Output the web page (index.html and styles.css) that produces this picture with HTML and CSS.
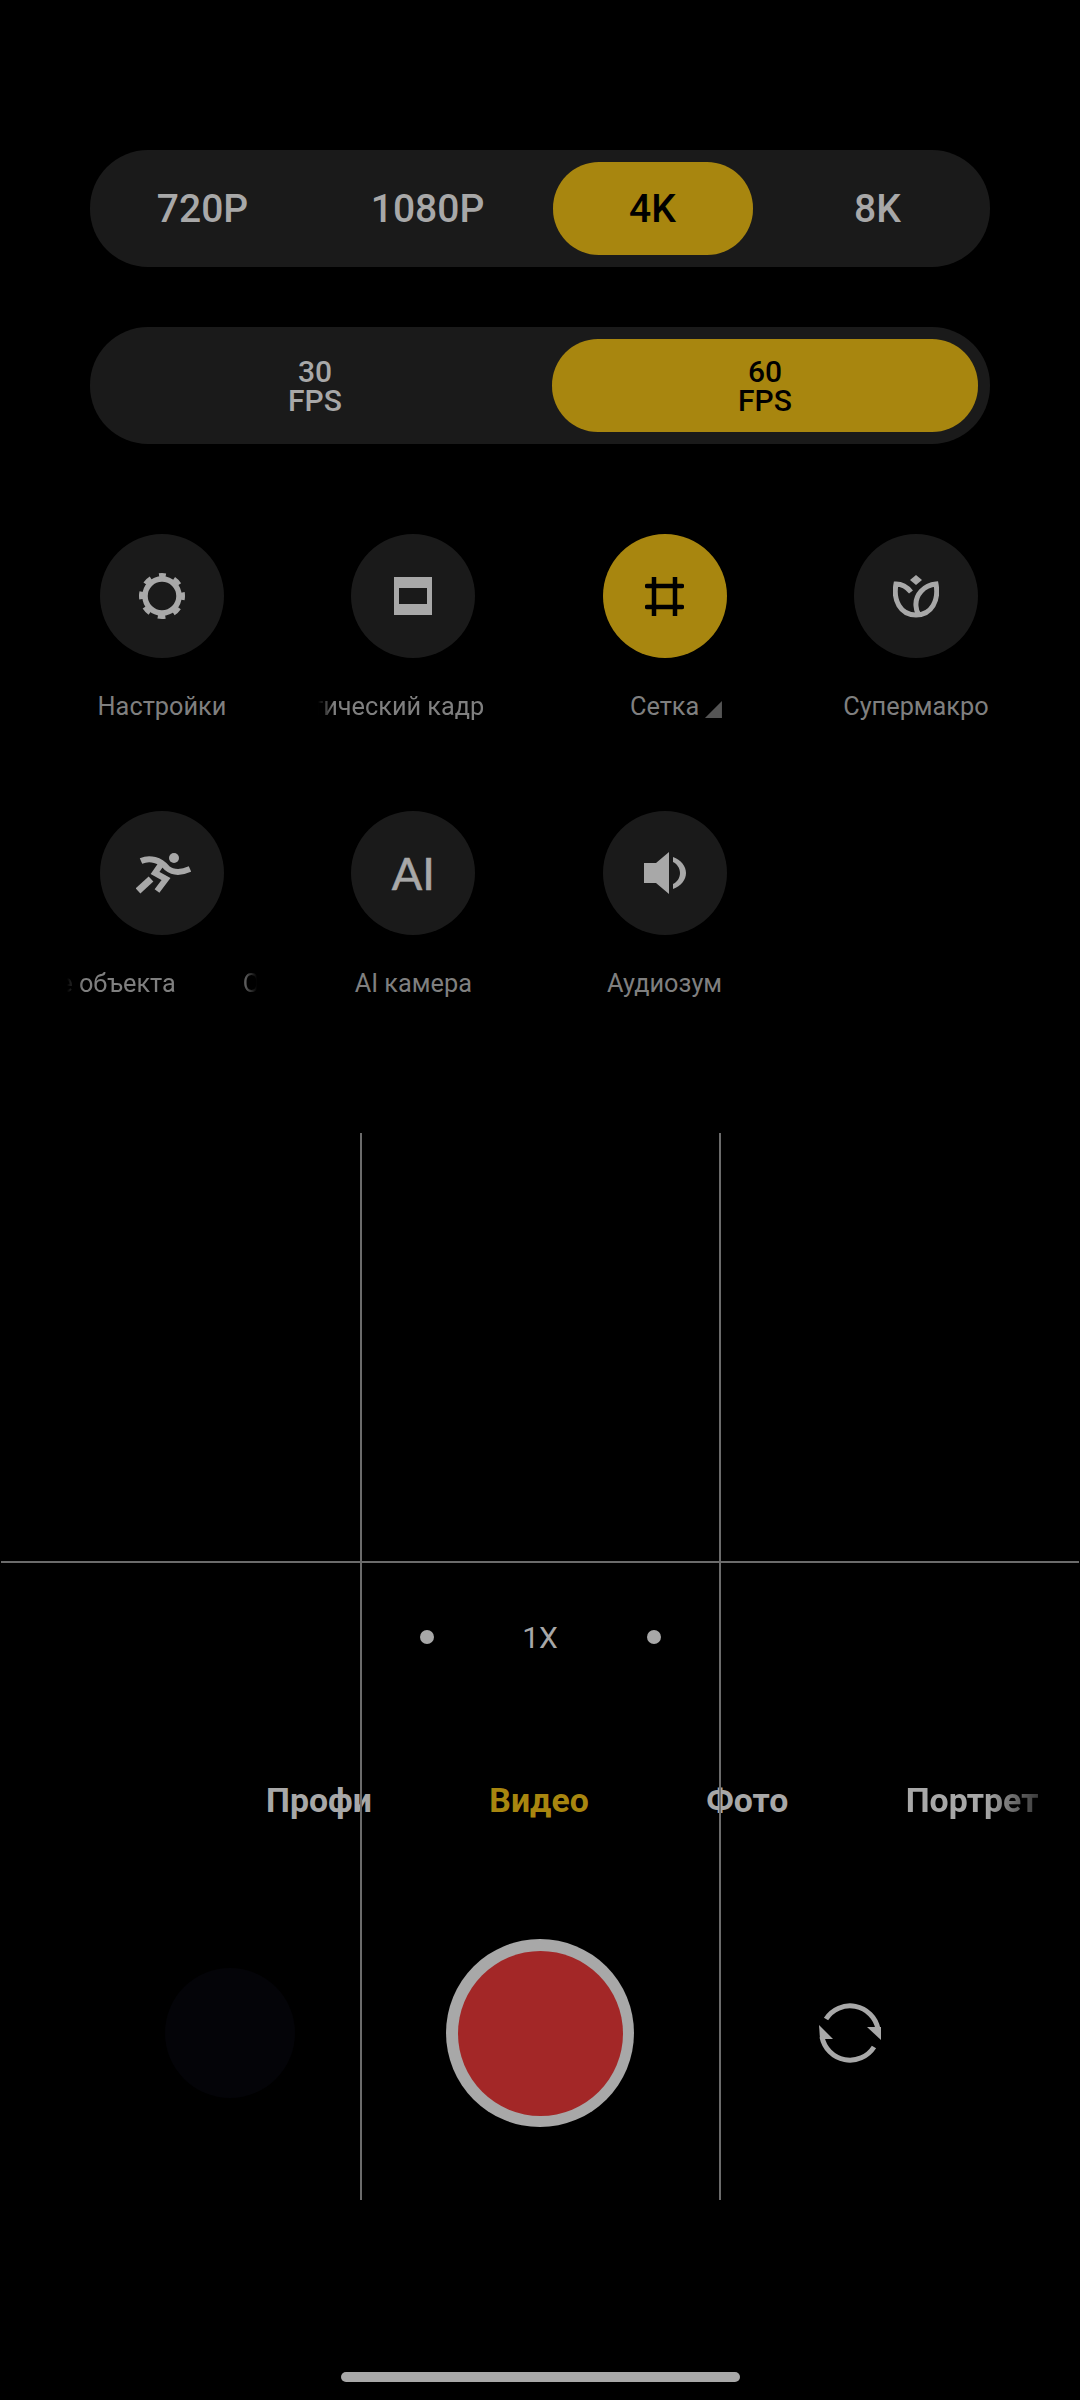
FILE: index.html
```html
<!DOCTYPE html>
<html lang="ru">
  <head>
    <meta charset="UTF-8" />
    <meta name="viewport" content="width=device-width, initial-scale=1.0" />
    <title>Камера</title>
    <link rel="stylesheet" href="styles.css">
  </head>
  <body>
    <main class="screen">
      <div class="pill pill-res">
        <span class="pill-item">720P</span>
        <span class="pill-item">1080P</span>
        <span class="pill-item pill-on">4K</span>
        <span class="pill-item">8K</span>
      </div>

      <div class="pill pill-fps">
        <span class="pill-item">30<br />FPS</span>
        <span class="pill-item pill-on">60<br />FPS</span>
      </div>

      <section class="options">
        <div class="option">
          <div class="circle">
            <svg width="46" height="46" viewBox="0 0 46 46" fill="none" stroke="#a8a8a8">
              <circle cx="23" cy="23" r="17" stroke-width="5.5" />
              <circle cx="23" cy="23" r="20.5" stroke-width="5" stroke-dasharray="7.6 8.5" stroke-dashoffset="3.8" transform="rotate(-90 23 23)" />
            </svg>
          </div>
          <p class="label">Настройки</p>
        </div>
        <div class="option">
          <div class="circle">
            <svg width="38" height="38" viewBox="0 0 38 38">
              <path fill="#a8a8a8" fill-rule="evenodd" d="M0 0H38V38H0ZM5 11V27H33V11Z" />
            </svg>
          </div>
          <p class="label label-fade label-end">Кинематический кадр</p>
        </div>
        <div class="option">
          <div class="circle circle-on">
            <svg width="39" height="39" viewBox="0 0 39 39" fill="none" stroke="#000" stroke-width="4.5" stroke-linecap="round">
              <path d="M9 0V39M30 0V39" stroke-linecap="butt" />
              <path d="M2 9H37M2 30H37" />
            </svg>
          </div>
          <p class="label"><span class="has-more">Сетка</span></p>
        </div>
        <div class="option">
          <div class="circle">
            <svg width="46" height="43" viewBox="0 0 46 43" fill="none" stroke="#a8a8a8" stroke-width="5">
              <path d="M23 0L29 5L23 10L17 5Z" fill="#a8a8a8" stroke="none" />
              <path d="M18 17C14 12 8 9 3 9C0 25 7 40 23 40C39 40 46 25 43 9C31 10 22 20 23 31C23 34 24 37 26 40" />
            </svg>
          </div>
          <p class="label">Супермакро</p>
        </div>
        <div class="option">
          <div class="circle">
            <svg class="icon-run" width="55" height="41" viewBox="0 0 55 41" fill="none" stroke="#a8a8a8" stroke-width="6">
              <circle cx="38" cy="5" r="5" fill="#a8a8a8" stroke="none" />
              <path d="M5 8C14 4 24 7 31 15C37 20 45 20 54 16" />
              <path d="M21 38L30 26L19 20L26 10" />
              <path d="M2 38L15 26" stroke-width="7" />
            </svg>
          </div>
          <p class="label label-fade"><span class="marquee">Отслеживание объекта</span><span class="marquee-next">Отслеживание объекта</span></p>
        </div>
        <div class="option">
          <div class="circle circle-ai">AI</div>
          <p class="label">AI камера</p>
        </div>
        <div class="option">
          <div class="circle">
            <svg width="42" height="42" viewBox="0 0 42 42" fill="#a8a8a8">
              <path d="M0 11H12L25 0V42L12 31H0Z" />
              <path d="M29 5C37 8 42 14 42 21C42 28 37 34 29 37V32C33 30 36 26 36 21C36 16 33 12 29 10Z" />
            </svg>
          </div>
          <p class="label">Аудиозум</p>
        </div>
      </section>

      <div class="zoom">
        <span class="zoom-dot"></span>
        <span class="zoom-value">1X</span>
        <span class="zoom-dot"></span>
      </div>

      <nav class="modes">
        <span>Профи</span>
        <span class="mode-on">Видео</span>
        <span>Фото</span>
        <span class="mode-last">Портрет</span>
      </nav>

      <section class="controls">
        <div class="gallery"></div>
        <div class="shutter"><div class="shutter-red"></div></div>
        <div class="switch">
          <svg width="62" height="62" viewBox="0 0 62 62" fill="none" stroke="#a8a8a8" stroke-width="5">
            <path d="M7 17A28.500 28.500 0 0 1 59 27" />
            <path d="M55 45A28.500 28.500 0 0 1 3 35" />
            <path d="M48 25L62 25V38Z" fill="#a8a8a8" stroke="none" />
            <path d="M0 23L14 37H1Z" fill="#a8a8a8" stroke="none" />
          </svg>
        </div>
      </section>

      <div class="home-bar"></div>

      <!-- Rejilla de la cámara, va por encima de todo -->
      <div class="grid-line grid-v1"></div>
      <div class="grid-line grid-v2"></div>
      <div class="grid-line grid-h"></div>
    </main>
  </body>
</html>
```

FILE: styles.css
```css
* {
  margin: 0;
  padding: 0;
  box-sizing: border-box;
}

body {
  background-color: #000;
  font-family: Roboto, "Noto Sans", sans-serif;
  color: #a8a8a8;
  overflow: hidden;
}

.screen {
  position: relative;
  width: 1080px;
  height: 2400px;
  padding-top: 150px;
  overflow: hidden;
}

/* Selectores de resolución y fps */
.pill {
  display: grid;
  width: 900px;
  height: 117px;
  margin: 0 auto 60px;
  background-color: #1a1a1a;
  border-radius: 58px;
  align-items: center;
}

.pill-res {
  grid-template-columns: repeat(4, 225px);
}

.pill-fps {
  grid-template-columns: repeat(2, 450px);
  margin-bottom: 90px;
}

.pill-item {
  display: flex;
  align-items: center;
  justify-content: center;
  height: 93px;
  margin: 0 12px;
  border-radius: 46px;
  text-align: center;
  font-size: 39px;
  font-weight: 500;
}

.pill-res .pill-item {
  margin: 0 12.500px;
}

.pill-fps .pill-item {
  font-size: 30px;
  font-weight: 500;
  line-height: 29px;
}

.pill-on {
  background-color: #a8860f;
  color: #000;
}

/* Botones redondos con su etiqueta */
.options {
  display: grid;
  grid-template-columns: repeat(4, 251.330px);
  row-gap: 87px;
  padding-left: 36.300px;
}

.option {
  display: flex;
  flex-direction: column;
  align-items: center;
}

.circle {
  display: flex;
  align-items: center;
  justify-content: center;
  width: 124px;
  height: 124px;
  border-radius: 50%;
  background-color: #1a1a1a;
}

.circle-on {
  background-color: #a8860f;
}

.circle-ai {
  font-family: Lato, Roboto, sans-serif;
  font-size: 45px;
  -webkit-text-stroke: 0.6px #a8a8a8;
}

.icon-run {
  margin-left: 3px;
}

.label {
  width: 190px;
  margin-top: 32px;
  height: 34px;
  line-height: 34px;
  font-size: 25.300px;
  color: #7f7f7f;
  text-align: center;
  white-space: nowrap;
}

/* Las etiquetas largas se desplazan y se cortan con degradado */
.label-fade {
  display: flex;
  overflow: hidden;
  -webkit-mask-image: linear-gradient(to right, transparent, #000 16px, #000 174px, transparent);
  mask-image: linear-gradient(to right, transparent, #000 16px, #000 174px, transparent);
}

.label-end {
  justify-content: flex-end;
  padding-right: 24px;
}

.label-fade span {
  flex-shrink: 0;
}

.marquee {
  margin-left: -169px;
}

.marquee-next {
  margin-left: 67px;
}

.has-more {
  position: relative;
}

.has-more::after {
  content: "";
  position: absolute;
  left: 75px;
  top: 9px;
  width: 17px;
  height: 17px;
  background-color: #555;
  clip-path: polygon(100% 0, 100% 100%, 0 100%);
}

/* Zoom */
.zoom {
  display: flex;
  align-items: center;
  justify-content: center;
  height: 40px;
  margin-top: 616px;
}

.zoom-dot {
  width: 14px;
  height: 14px;
  border-radius: 50%;
  background-color: #a8a8a8;
}

.zoom-value {
  width: 213px;
  text-align: center;
  font-size: 30px;
}

/* Modos de la cámara */
.modes {
  display: flex;
  gap: 117.500px;
  height: 40px;
  margin-top: 124px;
  padding-left: 266px;
  line-height: 40px;
  font-size: 33.800px;
  font-weight: 700;
  white-space: nowrap;
}

.mode-on {
  color: #a8860f;
}

.mode-last {
  -webkit-mask-image: linear-gradient(to right, #000 60%, rgba(0, 0, 0, 0.35));
  mask-image: linear-gradient(to right, #000 60%, rgba(0, 0, 0, 0.35));
}

/* Botones inferiores */
.controls {
  display: grid;
  grid-template-columns: repeat(3, 310px);
  justify-items: center;
  align-items: center;
  margin-top: 118px;
  padding-left: 75px;
}

.gallery {
  width: 130px;
  height: 130px;
  border-radius: 50%;
  background-color: #040408;
}

.shutter {
  display: flex;
  align-items: center;
  justify-content: center;
  width: 188px;
  height: 188px;
  border-radius: 50%;
  background-color: #a8a8a8;
}

.shutter-red {
  width: 165px;
  height: 165px;
  border-radius: 50%;
  background-color: #a32727;
}

.switch {
  display: flex;
}

.home-bar {
  width: 399px;
  height: 10px;
  margin: 245px auto 0;
  border-radius: 5px;
  background-color: #a8a8a8;
}

.grid-line {
  position: absolute;
  background-color: #6b6b6b;
}

.grid-v1,
.grid-v2 {
  top: 1133px;
  width: 2px;
  height: 1067px;
}

.grid-v1 {
  left: 360px;
}

.grid-v2 {
  left: 719px;
}

.grid-h {
  left: 1px;
  top: 1561px;
  width: 1078px;
  height: 2px;
}
```
